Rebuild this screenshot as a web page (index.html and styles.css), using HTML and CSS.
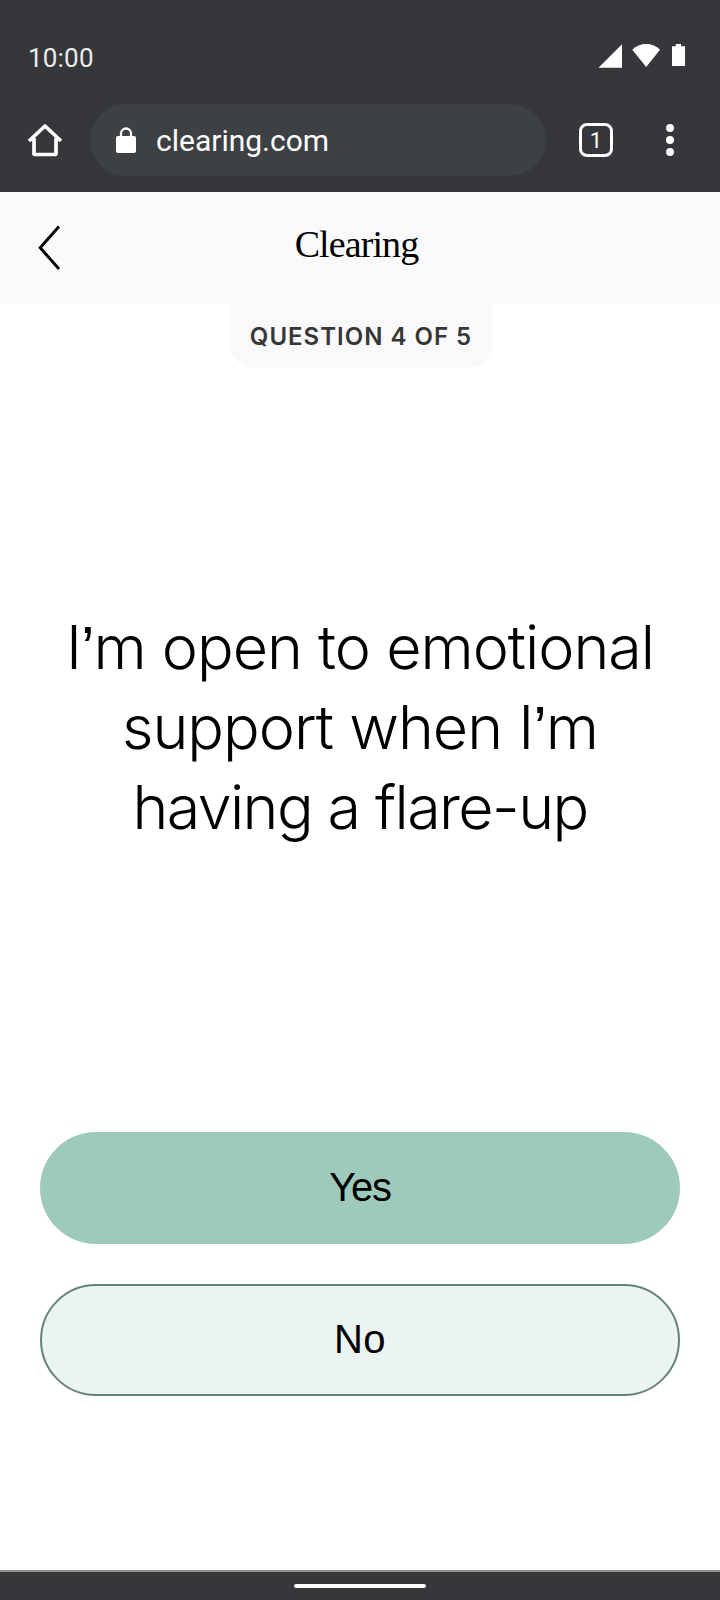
FILE: index.html
```html
<!DOCTYPE html>
<html lang="en">
<head>
<meta charset="utf-8">
<title>Clearing</title>
<link rel="stylesheet" href="styles.css">
</head>
<body>
<div class="screen">
  <header class="chrome">
    <div class="status">
      <span class="time">10:00</span>
      <svg class="status-icons" width="88" height="26" viewBox="0 0 88 26" fill="#fff">
        <path d="M0.5 24.8L24 1.2V24.8Z"/>
        <path d="M34.3 6.8Q40 1 48.2 1T62 6.8L48.2 24Z"/>
        <path d="M74 3.2h3.8V1h5.3v2.2H87V23H74Z"/>
      </svg>
    </div>
    <div class="toolbar">
      <svg class="home" width="36" height="36" viewBox="0 0 36 36" fill="none" stroke="#fff" stroke-width="3.700">
        <path d="M2 19L18 4L34 19" stroke-linejoin="round"/>
        <path d="M7 16V31.5Q7 32.500 8.5 32.500H27.500Q29 32.500 29 31.500V16" stroke-linejoin="round"/>
      </svg>
      <div class="address">
        <svg width="20" height="27" viewBox="0 0 20 27">
          <rect y="9" width="20" height="17" rx="2" fill="#fff"/>
          <path d="M5 10V6.500a5 5 0 0 1 10 0V10" fill="none" stroke="#fff" stroke-width="2.300"/>
        </svg>
        <span class="url">clearing.com</span>
      </div>
      <div class="tabs"><span>1</span></div>
      <svg class="more" width="8" height="32" viewBox="0 0 8 32" fill="#fff">
        <circle cx="4" cy="4" r="4"/><circle cx="4" cy="16" r="4"/><circle cx="4" cy="28" r="4"/>
      </svg>
    </div>
  </header>
  <div class="brandbar">
    <svg class="back" width="24" height="46" viewBox="0 0 24 46" fill="none" stroke="#000" stroke-width="2.900">
      <path d="M21 1.500L2.200 22.800L21 44"/>
    </svg>
    <div class="brand">Clearing</div>
  </div>
  <main class="quiz">
    <div class="progress">QUESTION 4 OF 5</div>
    <h1 class="question"><span class="l1">I<i>’</i>m open to emotional</span><span class="l2">support when I<i>’</i>m</span><span class="l3">having a flare-up</span></h1>
    <div class="answers">
      <button class="answer yes"><span>Yes</span></button>
      <button class="answer no"><span>No</span></button>
    </div>
  </main>
  <footer class="navbar"><div class="handle"></div></footer>
</div>
</body>
</html>
```
FILE: styles.css
```css
* { box-sizing: border-box; }
body { margin: 0; }
.screen {
  width: 720px;
  height: 1600px;
  display: flex;
  flex-direction: column;
  background: #fff;
  font-family: Inter, "Liberation Sans", sans-serif;
  color: #000;
}
.chrome { height: 192px; background: #36373b; color: #fff; }
.status {
  height: 104px;
  padding: 43px 34px 0 28px;
  display: flex;
  justify-content: space-between;
  align-items: flex-start;
}
.time {
  font: 400 26px/30px Roboto, sans-serif;
  letter-spacing: 0.2px;
  color: #ebebeb;
}
.toolbar {
  display: flex;
  align-items: center;
  height: 72px;
  padding: 0 46px 0 27px;
}
.address {
  display: flex;
  align-items: center;
  width: 456px;
  height: 72px;
  margin-left: 27px;
  padding-left: 26px;
  border-radius: 36px;
  background: #3d4144;
}
.url {
  margin-left: 20px;
  padding-top: 2px;
  font: 400 30px/40px Roboto, sans-serif;
}
.tabs {
  display: flex;
  align-items: center;
  justify-content: center;
  width: 34px;
  height: 34px;
  margin-left: 33px;
  border: 3px solid #fff;
  border-radius: 8px;
  font: 400 22px/24px Roboto, sans-serif;
}
.tabs span { padding-top: 1px; }
.more { margin-left: auto; }
.brandbar {
  height: 112px;
  background: #f9f9f9;
  display: grid;
  grid-template-columns: 1fr auto 1fr;
}
.back { margin: 33px 0 0 38px; }
.brand {
  margin-top: 32px;
  padding-right: 7px;
  font: 400 38px/40px "Liberation Serif", serif;
  letter-spacing: -0.9px;
}
.quiz {
  flex: 1;
  display: flex;
  flex-direction: column;
  align-items: center;
}
.progress {
  width: 262px;
  height: 64px;
  margin-left: 2px;
  border-radius: 0 0 24px 24px;
  background: #f9f9f9;
  color: #363636;
  font-size: 24px;
  font-weight: 600;
  line-height: 65px;
  text-align: center;
  letter-spacing: 1px;
  white-space: nowrap;
}
.question {
  margin: 239px 0 0;
  font-size: 61px;
  font-weight: 300;
  line-height: 80px;
  text-align: center;
}
.question span { display: block; white-space: nowrap; }
.question i {
  font-family: "Liberation Sans", sans-serif;
  font-style: normal;
  line-height: 1;
}
.l1 { letter-spacing: -1px; }
.l2 { letter-spacing: -1px; }
.l3 { letter-spacing: -1.6px; }
.answers {
  width: 640px;
  margin-top: 285px;
  display: flex;
  flex-direction: column;
  gap: 40px;
}
.answer {
  height: 112px;
  border: 0;
  border-radius: 56px;
  padding: 0 0 3px;
  color: #000;
  font: 400 40px/48px "Liberation Sans", sans-serif;
}
.yes { background: #9ecabb; letter-spacing: -1.2px; }
.no { background: #ebf4f1; border: 2px solid #668379; letter-spacing: 0.5px; }
.navbar {
  height: 30px;
  border-top: 2px solid #8e9190;
  background: #36373b;
  display: flex;
  justify-content: center;
  padding-top: 12px;
}
.handle { width: 132px; height: 4px; border-radius: 2px; background: #fff; }
```
